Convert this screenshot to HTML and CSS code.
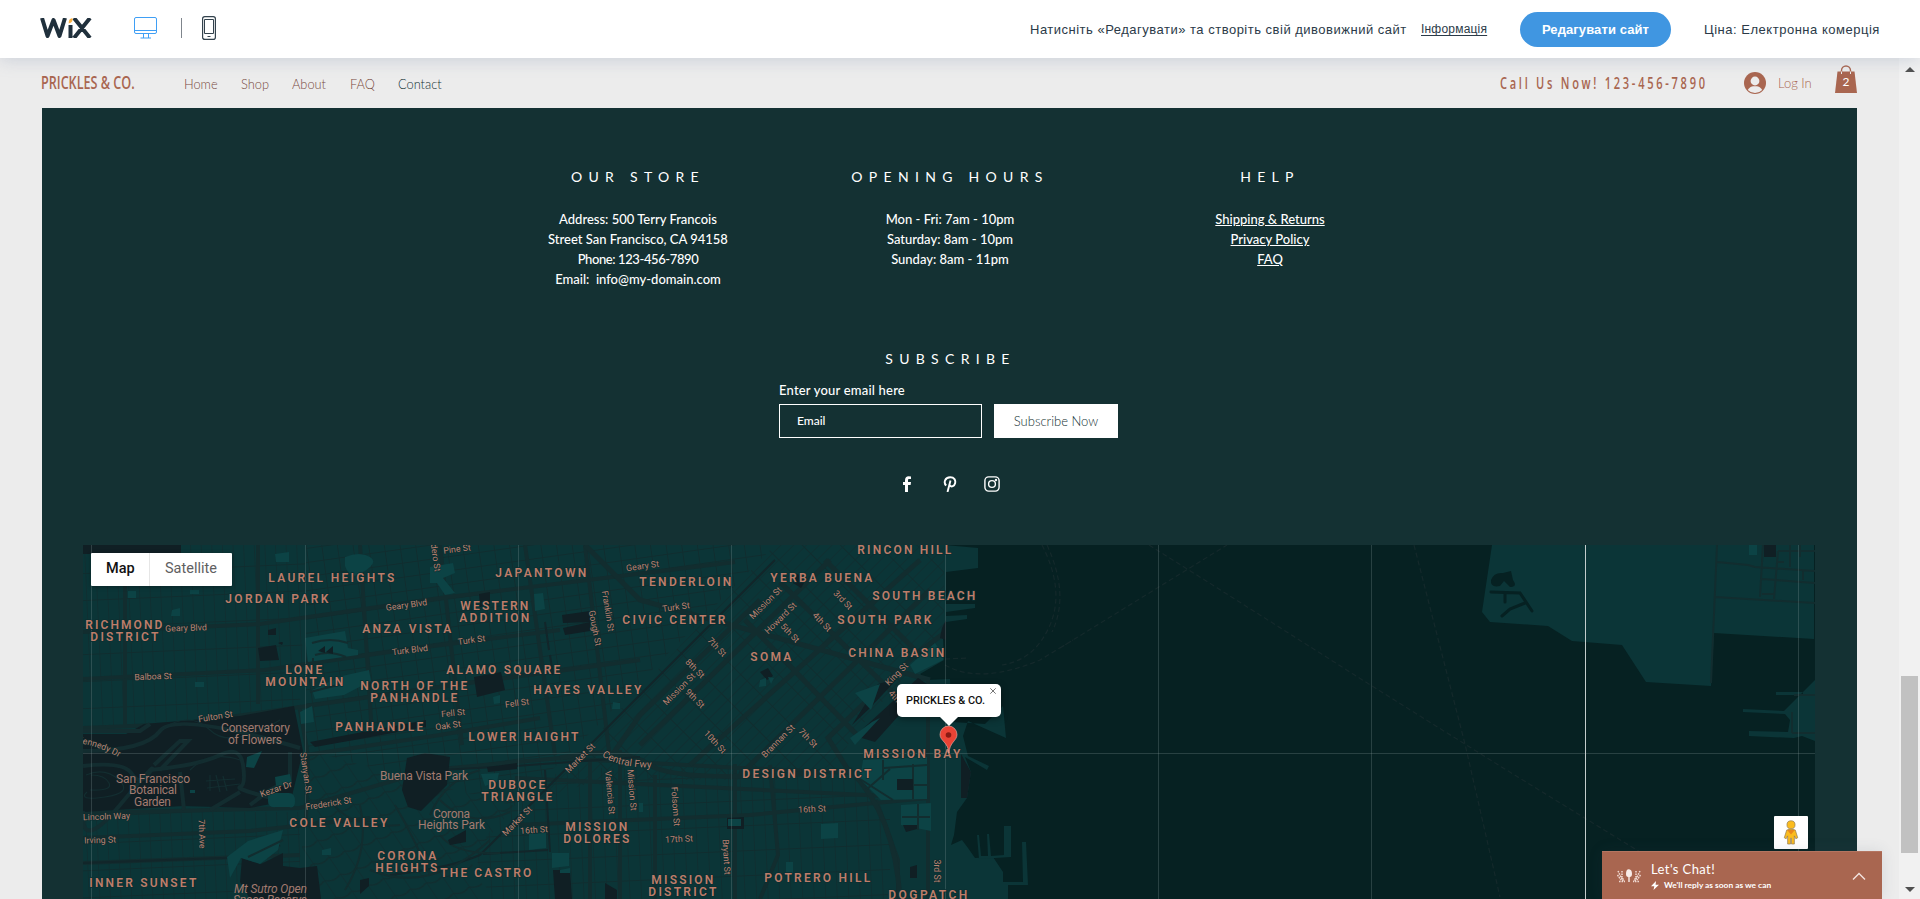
FILE: index.html
```html
<!DOCTYPE html>
<html lang="uk">
<head>
<meta charset="utf-8">
<title>Prickles &amp; Co.</title>
<link rel="stylesheet" href="styles.css">
</head>
<body>
<header class="topbar">
  <svg class="wix" viewBox="0 0 52 20" fill="none" stroke="#20303c" stroke-width="4"><path d="M2 0 7.500 18 13.500 2 19.500 18 25 0M34 0 50 20M50 0 34 20M30.500 7V20" stroke-linejoin="round"/><path d="M28.700 5.500C28.700 2 29.500 1 32.300 0C33 3 32 4.500 28.700 5.500Z" fill="#fbb040" stroke="none"/></svg>
  <svg class="desktop" viewBox="0 0 24 24" fill="none" stroke="#3f9ff5"><rect x=".5" y="1.500" width="22" height="16" rx="1.500"/><path d="M.5 14.500H23M9.500 18v4M14.500 18v4M6.500 22h10.500"/></svg>
  <span class="rule"></span>
  <svg class="phone" viewBox="0 0 14 24" fill="none" stroke="#33424d"><rect x=".6" y=".6" width="12.800" height="22.800" rx="2.200" stroke-width="1.200"/><path d="M2.500 3.500h9v14h-9zM5.500 20.500h3"/></svg>
  <div class="promo">
    <span class="promo-text">Натисніть «Редагувати» та створіть свій дивовижний сайт</span>
    <a class="info">Інформація</a>
    <a class="edit">Редагувати сайт</a>
    <span class="price">Ціна: Електронна комерція</span>
  </div>
</header>
<div class="viewport">
  <div class="site">
    <nav class="sitebar">
      <div class="brand"><span>PRICKLES &amp; CO.</span></div>
      <ul class="menu"><li class="m1">Home</li><li class="m2">Shop</li><li class="m3">About</li><li class="m4">FAQ</li><li class="m5">Contact</li></ul>
      <div class="call"><span>Call Us Now! 123-456-7890</span></div>
      <svg class="avatar" viewBox="0 0 22 22"><circle cx="11" cy="11" r="11" fill="#a96650"/><circle cx="11" cy="9" r="4.400" fill="#ececec"/><path d="M3.800 18C6 14.500 8 14.300 11 14.300s5 .2 7.200 3.700A10 10 0 0 1 3.800 18Z" fill="#ececec"/></svg>
      <span class="login">Log In</span>
      <svg class="bag" viewBox="0 0 22 28"><path d="M6.500 9V5.500a4.500 4.500 0 0 1 9 0V9" fill="none" stroke="#a96650" stroke-width="1.400"/><path d="M2.500 6.500h17L22 28H0Z" fill="#a96650"/><path d="M6.500 6.500V9M15.500 6.500V9" stroke="#ececec"/><text x="11" y="20.500" text-anchor="middle" class="bagnum">2</text></svg>
    </nav>
    <main class="footer">
      <div class="cols">
        <section class="store"><h2>OUR STORE</h2><p>Address: 500 Terry Francois<br>Street San Francisco, CA 94158<br><span class="tight">Phone: 123-456-7890</span><br>Email:&nbsp; info@my-domain.com</p></section>
        <section class="hours"><h2>OPENING HOURS</h2><p>Mon - Fri: 7am - 10pm<br>Saturday: 8am - 10pm<br>Sunday: 8am - 11pm</p></section>
        <section class="help"><h2>HELP</h2><p><u>Shipping &amp; Returns</u><br><u>Privacy Policy</u><br><u>FAQ</u></p></section>
      </div>
      <form class="subscribe">
        <h2>SUBSCRIBE</h2>
        <label>Enter your email here</label>
        <div class="row"><div class="field">Email</div><div class="send">Subscribe Now</div></div>
      </form>
      <div class="social">
        <svg viewBox="0 0 16 16"><path d="M6 16V9H4V6h2V4.200C6 1.500 7.500.3 9.500.3l2.500.1v2.700h-1.600C9.300 3.100 9 3.600 9 4.400V6h3l-.4 3H9v7Z" fill="#fff"/></svg>
        <svg viewBox="0 0 16 16" fill="none" stroke="#fff" stroke-width="1.900"><path d="M4.200 9.500C1.400 7 2.700 1.300 8.200 1.300c4.200 0 5.600 3 4.900 5.900-.7 3-3.700 4.200-5.300 2.200M8.500 4.500 5.500 16"/></svg>
        <svg viewBox="0 0 16 16" fill="none" stroke="#fff" stroke-width="1.400"><rect x=".9" y=".9" width="14.200" height="14.200" rx="3.800"/><circle cx="8" cy="8" r="3.400"/><circle cx="12" cy="4" r=".5"/></svg>
      </div>
      <div class="map">
        <svg class="tiles" viewBox="83 545 1732 354">
          <defs>
            <pattern id="rich" width="10.600" height="27" patternUnits="userSpaceOnUse" patternTransform="translate(84 546) rotate(-2.500)"><path d="M0 0V27" class="st"/><path d="M0 0H11" class="st w2"/></pattern>
            <pattern id="west" width="15.500" height="14" patternUnits="userSpaceOnUse" patternTransform="translate(306 548) rotate(-8)"><path d="M0 0V14M0 0H16" class="st w2"/></pattern>
            <pattern id="soma" width="27" height="9" patternUnits="userSpaceOnUse" patternTransform="translate(740 560) rotate(-45)"><path d="M0 0V9" class="st w2"/><path d="M0 0H27" class="st"/></pattern>
            <pattern id="miss" width="11.500" height="25" patternUnits="userSpaceOnUse" patternTransform="translate(520 760) rotate(-2.500)"><path d="M0 0V25" class="st"/><path d="M0 0H12" class="st w2"/></pattern>
            <pattern id="hill" width="17" height="20" patternUnits="userSpaceOnUse" patternTransform="translate(310 800) rotate(-22) skewX(12)"><path d="M0 0V20M0 0Q8 6 17 0" class="st"/></pattern>
          </defs>
          <rect x="83" y="545" width="1732" height="354" fill="#062122"/>
          <path class="land" d="M83 545H945L978 548V568L946 572V604L975 604V608L946 612V616L967 615V619L946 622 943 636 944 660 920 674 927 680 950 679 952 722 985 724 1003 706 1006 738 968 721 963 736 968 756 989 766 987 770 965 757 971 772 967 798 957 812 954 835 951 845 962 840 968 848 975 858 993 857 1003 872V885H1008V899H83Z"/>
          <path d="M83 545H306L300 710 83 729Z" fill="url(#rich)"/>
          <path d="M306 545H775L590 733 515 806 306 750Z" fill="url(#west)"/>
          <path d="M775 545H944V628L915 665 853 735 830 780H600L535 800Z" fill="url(#soma)"/>
          <path d="M83 812H300V899H83Z" fill="url(#rich)"/>
          <path d="M306 750 515 806 470 860 490 899H300Z" fill="url(#hill)"/>
          <path d="M515 790 570 768H850L890 815V899H490L475 855Z" fill="url(#miss)"/>
          <g class="road">
            <path class="w5" d="M83 632 260 624 440 598 735 562M83 679 265 670 410 649 560 630M83 728 180 724 300 707 440 687 640 660M125 545V727M258 545V704M306 755 440 735 540 718M299 705 308 755 306 820M360 545 372 735M440 545 462 745M525 545 555 755M585 545 610 760"/>
            <path class="w5" d="M83 813 300 808 430 770 560 758 740 768 850 773M83 838 250 831 370 818M83 863 300 855M655 775V899M620 750V899M590 760V899M770 765 778 855 760 899M735 764V899M928 680V899M515 778 928 798M515 825 750 815 928 798M876 800 898 860V899"/>
            <path class="w6" d="M585 545 640 600 930 680M610 758 640 715 760 600M640 745 830 560M690 765 920 560M740 775 930 590M850 773 828 738 915 655 943 634M560 758Q620 745 650 765T850 770Q895 815 900 899M745 620 860 738M780 582 900 700M825 560 915 650"/>
            <path class="w3 black" d="M775 560 480 855Q450 868 390 875M83 863 250 857 280 845M545 622 549 650M550 655 553 675M545 770 550 852M440 770 515 766 640 757M483 854 548 850"/>
            <path class="w3" d="M360 805Q370 850 345 890M395 805Q415 840 430 875M330 800Q350 830 400 825M370 870Q430 895 490 840M440 800Q470 830 510 812M440 835Q455 855 500 853M480 770Q445 780 430 815"/>
          </g>
          <g class="park">
            <path d="M83 545H181V554H83ZM83 734H126L144 724 240 716 294 706 303 751 291 800 250 808 183 806 83 812ZM258 648 276 645 279 660 260 661ZM268 630 276 628V635H268ZM310 742 426 720V727L315 747ZM407 758 425 753 450 757 447 785 421 811 408 807 402 790ZM474 677 501 672 505 690 477 697ZM562 615 590 611V622L563 623ZM563 628 590 622V631L565 635ZM479 594 490 592V605L480 607ZM487 767 517 763V769L488 772ZM448 840 466 830V842L450 845ZM242 858 261 864 283 853V866L300 868 317 866 321 899H250L240 882ZM360 880 369 878V886L360 894ZM553 870H570L572 899H555ZM605 883 617 890V899H605ZM727 818 744 817V829H727ZM852 725 878 684 897 679 870 708ZM855 736 918 678 927 684 875 742ZM897 779H913V790H897ZM910 867 917 865V878H910ZM961 754 971 772 967 798H961ZM760 672 768 668 773 676 767 680ZM797 574 807 578 801 588 793 583ZM942 628 946 620V640L940 638Z"/>
          </g>
          <g class="parkroad"><path d="M83 731 140 731 150 724M83 751Q145 751 160 731T300 748M83 766Q124 761 132 774T150 772 120 805 83 811M150 770Q200 765 220 755T243 765 240 787 280 800M180 772 184 810M290 752 290 780 270 790 250 805M154 765 180 741 188 741 160 770M210 810 240 792"/><path class="trail" d="M86 775Q105 767 119 780T105 797 87 792M91 775Q105 775 109 783T90 790M160 730Q190 710 210 730T280 720M210 775V791M216 775 220 792M223 776 227 791M206 781 235 779M207 788 240 784M190 770Q210 750 240 760"/></g>
          <g class="lot">
            <path d="M128 591H136V598H128ZM190 590H199V594H190ZM172 610 180 608V616H171ZM275 554 289 552V562H276ZM345 557Q360 551 370 557T360 574Q350 580 345 566ZM305 638 345 631 348 648 358 650 358 655 308 662ZM342 676 369 670 371 681 344 695 315 699 312 690ZM195 682H204V687H195ZM300 712 312 706 314 722 301 724ZM247 757 262 751 256 764 254 768 246 767ZM275 777 290 774 292 784 276 786ZM190 790H195V793H190ZM268 801V796Q270 793 275 793H289Q295 793 295 801T289 807H276Q268 808 268 801ZM227 857 248 841 283 830 278 850 260 864 241 858 230 878ZM322 850 331 848V855H322ZM430 567 453 563 455 573 443 578 455 593 445 595 437 583H430ZM534 594 543 593 545 609 535 611ZM493 697 500 695V703L494 704ZM481 774 499 773 497 782 485 786ZM529 834 546 833V848L529 850ZM552 853H569V866L552 868ZM560 870 570 868V873H560ZM728 819H741V826H728ZM639 803H643V812H639ZM613 702 620 703V709H612ZM910 665 935 643 943 655V660L925 669 915 674ZM855 693 880 684 871 710ZM850 738 872 722 880 718 855 745ZM863 760 927 757V799L881 800 860 779ZM901 805 931 803V831L901 825ZM821 824 838 823V838L821 839ZM786 862H793V874H786ZM760 680 766 678V686L759 687ZM768 677 774 678 771 684Z"/>
          </g>
          <path class="road w3 nofill" d="M312 643Q330 637 348 643M315 655Q330 650 346 657M313 658V666M860 779 893 800M866 790 890 769M884 768 927 765M913 764V799M883 760V780M913 785H928M248 857 283 840M310 692 342 684M918 804V830M902 817H930"/>
          <path fill="#101f24" d="M897 779H913V790H897ZM278 643Q285 640 282 645ZM318 651 325 646V653ZM326 652 333 646V654ZM903 825H917V829L906 832Z"/>
          <path class="pier" d="M977 835H979L981 856H988L987 834H989L991 856 1004 855V826H1011V857L979 859ZM1022 842H1026L1028 885H1003V882H1023Z"/>
          <path class="shore" d="M945 665Q980 685 1040 660L1073 640M1042 545Q1065 590 1050 625T1002 665M1047 545Q1070 595 1052 632M1060 648 1227 545M1149 545 1230 596 1372 686 1500 766 1640 852M1414 545 1465 744 1500 897M945 659 968 658"/>
          <path class="land" d="M1492 545 1482 612 1490 622 1548 626 1572 641 1622 645 1646 682 1711 686 1714 633 1814 639V545ZM1815 680 1784 711 1743 709V712L1785 714 1790 720 1788 732 1749 731V736L1794 738 1802 736 1815 741ZM1776 692H1803V695H1776Z"/>
          <g class="cove"><path fill="#062122" stroke="none" d="M1491 580Q1494 572 1503 573L1511 571 1513 580Q1518 587 1510 587L1504 581 1500 586Q1490 588 1491 580Z"/><path d="M1491 592 1520 593 1532 611M1505 593V602M1525 603 1510 609 1502 616"/></g>
          <path class="road w3 nofill" d="M1717 545 1711 683M1717 562 1748 565 1755 567 1815 571M1715 597 1815 603M1763 545 1760 597M1778 551 1774 599M1778 551H1815M1762 579 1815 583M1790 545V567M1778 562H1784M1803 571V580M1800 545V557M1762 594H1774M1794 695H1815M1792 712V733M1792 733H1815"/>
          <path class="park" d="M1764 545H1776V557H1764Z"/><path class="lot" d="M1749 545H1757V555H1749Z"/>
          <path class="grid" d="M91.500 545V899M305.500 545V899M518.500 545V899M731.500 545V899M945.500 545V899M1158.500 545V899M1371.500 545V899M1798.500 545V899M83 753.500H1815"/>
          <path d="M1585.500 545V899" stroke="#c3cccb"/>
          <g class="area" transform="translate(-.7 -.3)">
            <text x="269" y="582" textLength="126">LAUREL HEIGHTS</text><text x="226" y="603.500" textLength="103">JORDAN PARK</text><text x="86" y="629" textLength="77">RICHMOND</text><text x="91" y="641" textLength="68">DISTRICT</text><text x="363" y="633" textLength="89">ANZA VISTA</text><text x="286" y="674.500" textLength="37">LONE</text><text x="266" y="686.500" textLength="78">MOUNTAIN</text><text x="361" y="690.500" textLength="107">NORTH OF THE</text><text x="371" y="702" textLength="87">PANHANDLE</text><text x="336" y="731" textLength="88">PANHANDLE</text><text x="290" y="827" textLength="98">COLE VALLEY</text><text x="378" y="860.500" textLength="59">CORONA</text><text x="376" y="872" textLength="62">HEIGHTS</text><text x="90" y="887" textLength="107">INNER SUNSET</text>
            <text x="496" y="577" textLength="91">JAPANTOWN</text><text x="461" y="610.500" textLength="68">WESTERN</text><text x="460" y="622" textLength="70">ADDITION</text><text x="640" y="586.500" textLength="92">TENDERLOIN</text><text x="623" y="624.500" textLength="103">CIVIC CENTER</text><text x="447" y="674.500" textLength="114">ALAMO SQUARE</text><text x="534" y="694" textLength="108">HAYES VALLEY</text><text x="469" y="741" textLength="110">LOWER HAIGHT</text><text x="489" y="789" textLength="57">DUBOCE</text><text x="482" y="801" textLength="71">TRIANGLE</text><text x="566" y="831" textLength="62">MISSION</text><text x="564" y="843" textLength="66">DOLORES</text><text x="441" y="877.500" textLength="91">THE CASTRO</text><text x="652" y="884.500" textLength="62">MISSION</text><text x="649" y="896.500" textLength="68">DISTRICT</text>
            <text x="858" y="554" textLength="94">RINCON HILL</text><text x="771" y="582.500" textLength="102">YERBA BUENA</text><text x="873" y="600" textLength="103">SOUTH BEACH</text><text x="838" y="624.500" textLength="94">SOUTH PARK</text><text x="751" y="661.500" textLength="41">SOMA</text><text x="849" y="657.500" textLength="96">CHINA BASIN</text><text x="864" y="758.500" textLength="97">MISSION BAY</text><text x="743" y="778" textLength="129">DESIGN DISTRICT</text><text x="765" y="882.500" textLength="106">POTRERO HILL</text><text x="889" y="899.500" textLength="79">DOGPATCH</text>
          </g>
          <g class="place">
            <text x="221" y="732" textLength="69">Conservatory</text><text x="228" y="744" textLength="54">of Flowers</text><text x="116" y="782.500" textLength="74">San Francisco</text><text x="129" y="794" textLength="48">Botanical</text><text x="134" y="806" textLength="37">Garden</text><text x="380" y="779.500" textLength="88">Buena Vista Park</text><text x="433" y="817.500" textLength="37">Corona</text><text x="418" y="829" textLength="67">Heights Park</text><text x="234" y="892.500" textLength="73" font-style="italic">Mt Sutro Open</text><text x="233" y="904" textLength="74" font-style="italic">Space Reserve</text>
          </g>
          <defs><path id="fwy" d="M602 756Q618 768 656 768"/><path id="ken" d="M77 743Q98 745 126 761"/></defs>
          <g class="street">
            <text class="fwy"><textPath href="#fwy">Central Fwy</textPath></text><text class="curve"><textPath href="#ken">Kennedy Dr</textPath></text>
            <text transform="translate(406.500 605) rotate(-8)" dy="3">Geary Blvd</text><text transform="translate(186 628) rotate(-2)" dy="3">Geary Blvd</text><text transform="translate(410 650) rotate(-7)" dy="3">Turk Blvd</text><text transform="translate(153 676.500) rotate(-2)" dy="3">Balboa St</text><text transform="translate(215.500 716.500) rotate(-9)" dy="3">Fulton St</text><text transform="translate(276 789) rotate(-19)" dy="3">Kezar Dr</text><text transform="translate(328.500 803.500) rotate(-9)" dy="3">Frederick St</text><text transform="translate(106.500 816.500) rotate(-2)" dy="3">Lincoln Way</text><text transform="translate(100 840) rotate(-2)" dy="3">Irving St</text><text transform="translate(202 834) rotate(88)" dy="3">7th Ave</text><text transform="translate(306 773) rotate(82)" dy="3">Stanyan St</text>
            <text transform="translate(457 549) rotate(-7)" dy="3">Pine St</text><text transform="translate(434 546) rotate(82)" dy="3">Divisadero St</text><text transform="translate(642.500 566) rotate(-8)" dy="3">Geary St</text><text transform="translate(676 607) rotate(-8)" dy="3">Turk St</text><text transform="translate(471.500 640) rotate(-8)" dy="3">Turk St</text><text transform="translate(608 611) rotate(81)" dy="3">Franklin St</text><text transform="translate(595 628) rotate(79)" dy="3">Gough St</text><text transform="translate(717 647) rotate(47)" dy="3">7th St</text><text transform="translate(695 668.500) rotate(45)" dy="3">8th St</text><text transform="translate(679 689) rotate(-45)" dy="3">Mission St</text><text transform="translate(695 698.500) rotate(45)" dy="3">9th St</text><text transform="translate(715 742) rotate(47)" dy="3">10th St</text><text transform="translate(517 703) rotate(-8)" dy="3">Fell St</text><text transform="translate(453 713) rotate(-6)" dy="3">Fell St</text><text transform="translate(448 725.500) rotate(-8)" dy="3">Oak St</text><text transform="translate(580 758) rotate(-45)" dy="3">Market St</text><text transform="translate(517 821) rotate(-45)" dy="3">Market St</text><text transform="translate(534 830) rotate(-4)" dy="3">16th St</text><text transform="translate(679 839) rotate(-3)" dy="3">17th St</text><text transform="translate(610 792.500) rotate(85)" dy="3">Valencia St</text><text transform="translate(632 790) rotate(85)" dy="3">Mission St</text><text transform="translate(675.500 806.500) rotate(86)" dy="3">Folsom St</text><text transform="translate(726.500 857) rotate(87)" dy="3">Bryant St</text>
            <text transform="translate(812 809) rotate(-3)" dy="3">16th St</text><text transform="translate(765.500 603) rotate(-45)" dy="3">Mission St</text><text transform="translate(780.500 618) rotate(-45)" dy="3">Howard St</text><text transform="translate(790 633) rotate(46)" dy="3">5th St</text><text transform="translate(822 622) rotate(46)" dy="3">4th St</text><text transform="translate(843 600) rotate(46)" dy="3">3rd St</text><text transform="translate(896.500 674) rotate(-45)" dy="3">King St</text><text transform="translate(898 700) rotate(46)" dy="3">4th St</text><text transform="translate(778 741) rotate(-45)" dy="3">Brannan St</text><text transform="translate(808 738) rotate(46)" dy="3">7th St</text><text transform="translate(937 871) rotate(90)" dy="3">3rd St</text>
          </g>
          <path d="M949 753C948 742 940 741 940 734.500A8.500 8.500 0 0 1 957 734.500C957 741 949.500 742 949 753Z" fill="#ea4335" stroke="#f4b3ab" stroke-width=".6"/><circle cx="948.500" cy="735" r="2.800" fill="#891a13"/>
        </svg>
        <div class="maptype"><span class="on">Map</span><span>Satellite</span></div>
        <div class="bubble">PRICKLES &amp; CO.<svg viewBox="0 0 6 6"><path d="M.3.3 5.700 5.700M5.700.3.3 5.700" stroke="#666" stroke-width=".9"/></svg></div>
        <div class="pegman"><svg viewBox="0 0 16 26"><g fill="#fbbc1f" stroke="#8f7b55" stroke-width=".7"><path d="M3.500 10.500Q8 8 12.500 10.500L15 18.500 13 19.500 11.500 16.500V25H8.500V19H7.500V25H4.500V16.500L3 19.500 1 18.500Z"/><circle cx="8" cy="5" r="4.200"/></g><path d="M4 10.500h8L8 15Z" fill="#e8871e"/></svg></div>
      </div>
    </main>
  </div>
  <aside class="scroll"><i class="up"></i><i class="thumb"></i><i class="down"></i></aside>
</div>
<div class="chat">
  <svg class="plants" viewBox="0 0 24 14" fill="#f8ece8"><path d="M9 5Q9 0 12 .3T15 5Q15 8 12.700 8V13h-1.400V8Q9 8 9 5Z"/><g fill="none" stroke="#f0d8d0" stroke-width="1.500" stroke-dasharray="1.600 .9"><path d="M1 2 6 12M5 2V8L7 12M.5 6 4 11M2 12.500H8M23 2 18 12M19 2V8L17 12M23.500 6 20 11M22 12.500H16"/></g></svg>
  <div class="chatcopy"><div class="chattitle">Let's Chat!</div><div class="chatsub"><svg viewBox="0 0 8 9"><path d="M5 0 0 5.300H3.300L2.500 9 8 3.700H4.600Z" fill="#fff"/></svg><span>We'll reply as soon as we can</span></div></div>
  <svg class="chev" viewBox="0 0 14 8" fill="none" stroke="#f3e4df" stroke-width="1.400"><path d="M1 7.500 7 1.500 13 7.500"/></svg>
</div>
</body>
</html>
```
FILE: styles.css
```css
*{box-sizing:border-box}
body{margin:0;height:899px;overflow:hidden;background:#ececec;font-family:Lato,"Open Sans",sans-serif;color:#fff}
h2,p,ul{margin:0;padding:0;font-weight:400}
svg{display:block;flex:none}
.topbar{position:relative;z-index:3;height:58px;background:#fff;display:flex;align-items:center;padding:0 40px;box-shadow:0 2px 16px rgba(120,135,170,.28);font:13px "Liberation Sans",sans-serif;color:#2b3a48;white-space:nowrap}
.wix{width:52px;height:20px;margin-top:-2px}
.desktop{width:24px;height:24px;margin-left:42px;margin-top:-2px}
.rule{width:1px;height:20px;background:#7f858c;margin-left:23px;margin-top:-2px}
.phone{width:14px;height:24px;margin-left:20px;margin-top:-2px}
.promo{display:flex;align-items:center;margin-left:auto;height:57px}
.promo-text{width:391px;letter-spacing:.5px}
.info{width:99px;font-size:12px;letter-spacing:.2px;text-decoration:underline;text-underline-offset:2px}
.edit{width:151px;height:35px;border-radius:18px;background:#4096e1;color:#fff;font-weight:700;display:flex;align-items:center;justify-content:center;letter-spacing:.1px}
.price{width:176px;margin-left:33px;letter-spacing:.52px}
.viewport{display:flex;height:841px}
.site{width:1899px}
.sitebar{height:50px;display:flex;align-items:center;padding-left:41px;color:#a96650;font-size:13px;white-space:nowrap}
.brand{width:143px;margin-top:-2px}
.brand span,.call span{display:inline-block;transform-origin:0 50%;font-family:"Open Sans",sans-serif;font-weight:600}
.brand span{font-size:18px;transform:scaleX(.7)}
.menu{display:flex;list-style:none;width:1316px;font-size:12.800px;font-weight:300;padding-top:1px;color:#784a3e}
.m1{width:57px}.m2{width:51px}.m3{width:58px}.m4{width:48px}.m5{color:#143133}
.call{width:244px;margin-top:-2px}
.call span{font-size:17px;letter-spacing:4.200px;transform:scaleX(.65)}
.avatar{width:22px;height:22px}
.login{width:57px;margin-left:12px;font-weight:300}
.bag{width:22px;height:28px;margin-top:-9px}
.bagnum{font:12px Lato,sans-serif;fill:#fff}
.footer{margin-left:42px;width:1815px;height:791px;background:#143133}
.cols{display:grid;grid-template-columns:192px 432px 208px;padding:60px 0 0 500px;height:240px;text-align:center;font-size:13px;font-weight:500;line-height:20px;white-space:nowrap}
.cols h2,.subscribe h2{font-size:14px;line-height:18px;letter-spacing:6.300px}
.cols p{margin-top:23px;font-weight:500}
.tight{letter-spacing:-.4px}
.subscribe{width:339px;margin-left:737px;height:128px}
.subscribe h2{text-align:center;padding:2px 0 0 4px}
.subscribe label{display:block;font-size:13px;font-weight:500;line-height:20px;margin:12px 0 4px;letter-spacing:.2px}
.row{display:flex;gap:12px;font-size:12px}
.field{width:203px;height:34px;border:1px solid #fff;padding:8px 17px;line-height:15px;font-weight:500}
.send{width:124px;height:34px;background:#fff;color:#143133;font-size:13px;font-weight:300;line-height:35px;text-align:center}
.social{display:flex;gap:26.500px;padding-left:857px;height:69px}
.social svg{width:16px;height:16px}
.map{position:relative;margin-left:41px;width:1732px;height:354px;font-family:Roboto,sans-serif}
.tiles{width:1732px;height:354px}
.land{fill:#0b3537}
.st{fill:none;stroke:#102d2f;stroke-width:1.500}
.st.w2{stroke-width:2}
.road{fill:none;stroke:#122d2f}
.w3{stroke-width:2}.w5{stroke-width:4}.w6{stroke-width:5}
.black{stroke:#12262a}.nofill{fill:none}
.park{fill:#101f24}
.parkroad{fill:none;stroke:#132d30;stroke-width:4}
.trail{stroke-width:1.200}
.lot{fill:#0c4345}
.pier{fill:#0b3537}
.shore{fill:none;stroke:#14292b;stroke-width:1.200;stroke-dasharray:5 3}
.cove{fill:none;stroke:#062122;stroke-width:3;stroke-linecap:round}
.grid{fill:none;stroke:rgba(145,165,165,.25)}
.area{font-size:12px;font-weight:600;fill:#bd7d6a;stroke:#0b2f31;stroke-width:1.500;paint-order:stroke}
.place{font-size:12px;fill:#a27b70}
.street{font-size:8.800px;fill:#b98373;text-anchor:middle;stroke:#0f2c2e;stroke-width:1.200;paint-order:stroke}
.street .fwy{font-size:10px;text-anchor:start}
.street .curve{text-anchor:start}
.maptype{position:absolute;left:8px;top:8px;width:141px;height:33px;background:#fff;display:flex;align-items:center;color:#5f6061;font-size:14.500px;border-radius:1px;box-shadow:0 1px 4px rgba(0,0,0,.3)}
.maptype span{height:33px;line-height:32px;padding-left:15px}
.maptype .on{width:59px;color:#111;font-weight:500;border-right:1px solid #e6e6e6;padding-left:15px}
.bubble{position:absolute;left:814px;top:139px;width:104px;height:33px;border-radius:5px;background:#fff;color:#111;font-size:10.900px;font-weight:500;line-height:33px;padding-left:9px;white-space:nowrap;box-shadow:0 2px 7px rgba(0,0,0,.4)}
.bubble:after{content:"";position:absolute;left:43px;top:33px;border:9px solid transparent;border-top-color:#fff;border-bottom:0}
.bubble svg{position:absolute;left:93px;top:4px;width:6px;height:6px}
.pegman{position:absolute;left:1691px;top:271px;width:34px;height:33px;background:#fff;border-radius:1px;padding:4px 9px}
.pegman svg{width:16px;height:25px}
.scroll{width:21px;background:#f1f1f1;position:relative}
.scroll i{position:absolute}
.thumb{left:2px;top:618px;width:17px;height:177px;background:#c1c1c1}
.up,.down{left:6px;border:5px solid transparent}
.up{top:9px;border-bottom-color:#505050;border-top:0}
.down{top:829px;border-top-color:#505050;border-bottom:0}
.chat{position:absolute;z-index:4;left:1602px;top:851px;width:280px;height:48px;background:#a96650;border-top:1px solid #b47561;display:flex;box-shadow:0 0 14px rgba(60,70,90,.12)}
.plants{width:24px;height:14px;margin:17px 0 0 15px}
.chatcopy{width:190px;margin-left:10px}
.chattitle{font-size:13px;line-height:18px;margin-top:8px;letter-spacing:.4px}
.chatsub{display:flex;align-items:center;gap:5px;font-size:8.400px;font-weight:700;line-height:11px;margin-top:2px;white-space:nowrap}
.chatsub svg{width:8px;height:9px}
.chev{width:14px;height:8px;margin:20px 0 0 11px}
```
